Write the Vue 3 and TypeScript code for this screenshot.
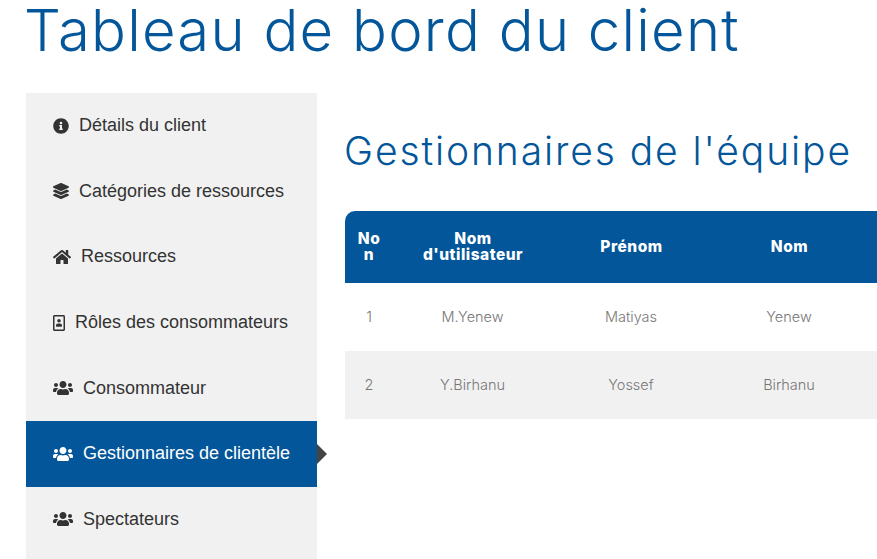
<script setup lang="ts">
interface NavItem { label: string; icon: string; gap: number; active?: boolean }
const icons: Record<string, { box: string; w: number; h: number; d: string }> = {
  info: { box: '0 0 512 512', w: 16, h: 16, d: 'M256 8C119.043 8 8 119.083 8 256c0 136.997 111.043 248 248 248s248-111.003 248-248C504 119.083 392.957 8 256 8zm0 110c23.196 0 42 18.804 42 42s-18.804 42-42 42-42-18.804-42-42 18.804-42 42-42zm56 254c0 6.627-5.373 12-12 12h-88c-6.627 0-12-5.373-12-12v-24c0-6.627 5.373-12 12-12h12v-64h-12c-6.627 0-12-5.373-12-12v-24c0-6.627 5.373-12 12-12h64c6.627 0 12 5.373 12 12v100h12c6.627 0 12 5.373 12 12v24z' },
  layers: { box: '0 0 512 512', w: 16, h: 16, d: 'M12.41 148.02l232.94 105.67c6.8 3.09 14.49 3.09 21.29 0l232.94-105.67c16.55-7.51 16.55-32.52 0-40.03L266.65 2.31a25.607 25.607 0 0 0-21.29 0L12.41 107.98c-16.55 7.51-16.55 32.53 0 40.04zm487.18 88.28l-58.09-26.33-161.64 73.27c-7.56 3.43-15.59 5.17-23.86 5.17s-16.29-1.74-23.86-5.17L70.51 209.97l-58.1 26.33c-16.55 7.5-16.55 32.5 0 40l232.94 105.59c6.8 3.08 14.49 3.08 21.29 0L499.59 276.3c16.55-7.5 16.55-32.5 0-40zm0 127.8l-57.87-26.23-161.86 73.37c-7.56 3.43-15.59 5.17-23.86 5.17s-16.29-1.74-23.86-5.17L70.29 337.87 12.41 364.1c-16.55 7.5-16.55 32.5 0 40l232.94 105.59c6.8 3.08 14.49 3.08 21.29 0L499.59 404.1c16.55-7.5 16.55-32.5 0-40z' },
  home: { box: '0 0 576 512', w: 18, h: 16, d: 'M280.37 148.26L96 300.11V464a16 16 0 0 0 16 16l112.06-.29a16 16 0 0 0 15.92-16V368a16 16 0 0 1 16-16h64a16 16 0 0 1 16 16v95.64a16 16 0 0 0 16 16.05L464 480a16 16 0 0 0 16-16V300L295.67 148.26a12.19 12.19 0 0 0-15.3 0zM571.6 251.47L488 182.56V44.05a12 12 0 0 0-12-12h-56a12 12 0 0 0-12 12v72.61L318.47 43a48 48 0 0 0-61 0L4.34 251.47a12 12 0 0 0-1.6 16.9l25.5 31A12 12 0 0 0 45.15 301l235.22-193.74a12.19 12.19 0 0 1 15.3 0L530.9 301a12 12 0 0 0 16.9-1.6l25.5-31a12 12 0 0 0-1.7-16.93z' },
  portrait: { box: '0 0 384 512', w: 12, h: 16, d: 'M336 0H48C21.5 0 0 21.5 0 48v416c0 26.5 21.5 48 48 48h288c26.5 0 48-21.5 48-48V48c0-26.5-21.5-48-48-48zm0 464H48V48h288v416zM192 128c30.9 0 56 25.1 56 56s-25.1 56-56 56-56-25.1-56-56 25.1-56 56-56zm-96 232v-24c0-35 28-64 64-64h64c36 0 64 29 64 64v24c0 8-6 16-16 16H112c-10 0-16-8-16-16z' },
  users: { box: '0 0 640 512', w: 20, h: 16, d: 'M96 224c35.3 0 64-28.7 64-64s-28.7-64-64-64-64 28.7-64 64 28.7 64 64 64zm448 0c35.3 0 64-28.7 64-64s-28.7-64-64-64-64 28.7-64 64 28.7 64 64 64zm32 32h-64c-17.6 0-33.5 7.1-45.1 18.6 40.3 22.1 68.9 62 75.1 109.4h66c17.7 0 32-14.3 32-32v-32c0-35.3-28.7-64-64-64zm-256 0c61.9 0 112-50.1 112-112S381.9 32 320 32 208 82.1 208 144s50.1 112 112 112zm76.8 32h-8.3c-20.8 10-43.9 16-68.5 16s-47.6-6-68.5-16h-8.3C179.6 288 128 339.6 128 403.2V432c0 26.5 21.5 48 48 48h288c26.5 0 48-21.5 48-48v-28.8c0-63.6-51.6-115.2-115.2-115.2zm-223.7-13.4C161.5 263.1 145.6 256 128 256H64c-35.3 0-64 28.7-64 64v32c0 17.7 14.3 32 32 32h65.9c6.3-47.4 34.9-87.3 75.2-109.4z' }
}
const nav: NavItem[] = [
  { label: 'Détails du client', icon: 'info', gap: 10 },
  { label: 'Catégories de ressources', icon: 'layers', gap: 10 },
  { label: 'Ressources', icon: 'home', gap: 10 },
  { label: 'Rôles des consommateurs', icon: 'portrait', gap: 10 },
  { label: 'Consommateur', icon: 'users', gap: 10 },
  { label: 'Gestionnaires de clientèle', icon: 'users', gap: 10, active: true },
  { label: 'Spectateurs', icon: 'users', gap: 10 }
]
const heads = ['Non', "Nom d'utilisateur", 'Prénom', 'Nom']
const rows = [
  ['1', 'M.Yenew', 'Matiyas', 'Yenew'],
  ['2', 'Y.Birhanu', 'Yossef', 'Birhanu']
]
</script>

<template>
  <div class="page">
    <h1 class="title">Tableau de bord du client</h1>
    <div class="layout">
      <nav class="side">
        <a
          v-for="item in nav"
          :key="item.label"
          class="item"
          :class="{ active: item.active }"
          :style="{ gap: item.gap + 'px' }"
        >
          <svg class="icon" :viewBox="icons[item.icon].box" :width="icons[item.icon].w" :height="icons[item.icon].h">
            <path fill="currentColor" :d="icons[item.icon].d" />
          </svg>
          <span>{{ item.label }}</span>
        </a>
      </nav>
      <main class="content">
        <h2 class="sub">Gestionnaires de l'équipe</h2>
        <div class="table">
          <div class="row head">
            <div v-for="h in heads" :key="h" class="cell" :class="{ narrow: h === 'Non', wrap: h !== 'Non' }">{{ h }}</div>
          </div>
          <div v-for="(r, i) in rows" :key="i" class="row body" :class="{ alt: i === 1 }">
            <div v-for="(c, j) in r" :key="j" class="cell">{{ c }}</div>
          </div>
        </div>
      </main>
    </div>
  </div>
</template>

<style>
html, body { margin: 0; background: #fff; overflow: hidden; }
</style>

<style scoped>
.page { width: 877px; height: 559px; overflow: hidden; box-sizing: border-box; padding-left: 26px; }
.title {
  margin: 0 0 0 -2px; font-family: Inter, sans-serif; font-weight: 300; font-size: 58px; line-height: 60px;
  color: #035699; white-space: nowrap; letter-spacing: 1.25px; height: 93px;
}
.layout { display: flex; gap: 28px; }
.side { width: 291px; flex: none; background: #f1f1f1; height: 466px; }
.item {
  position: relative; display: flex; align-items: center; height: 65.6px; padding-left: 27px;
  box-sizing: border-box; font-family: "Liberation Sans", Arial, sans-serif; font-size: 18px; color: #333;
}
.icon { flex: none; }
.item.active { background: #035699; color: #fff; }
.item.active::after {
  content: ""; position: absolute; left: 100%; top: 50%; margin-top: -10px;
  border-left: 10px solid #444; border-top: 10px solid transparent; border-bottom: 10px solid transparent;
}
.content { width: 650px; flex: none; }
.sub {
  margin: 0 0 0 -1px; padding-top: 34px; height: 84px; font-family: Inter, sans-serif; font-weight: 300;
  font-size: 39px; line-height: 48px; color: #035699; white-space: nowrap; letter-spacing: 1.9px;
}
.table { font-family: Inter, sans-serif; width: 650px; }
.row { display: grid; grid-template-columns: 48px 159px 158px 158px 127px; }
.cell { display: flex; align-items: center; justify-content: center; text-align: center; }
.head {
  height: 72px; background: #035699; color: #fff; font-weight: 800; font-size: 15.5px; line-height: 16px;
  letter-spacing: 0.5px; border-top-left-radius: 10px;
}
.narrow { word-break: break-all; padding: 0 11px; }
.wrap { padding: 0 24px 0 25px; }
.body { height: 68px; color: #777; font-size: 14.5px; font-weight: 300; padding-bottom: 1px; box-sizing: border-box; }
.alt { background: #f1f1f1; }
</style>
